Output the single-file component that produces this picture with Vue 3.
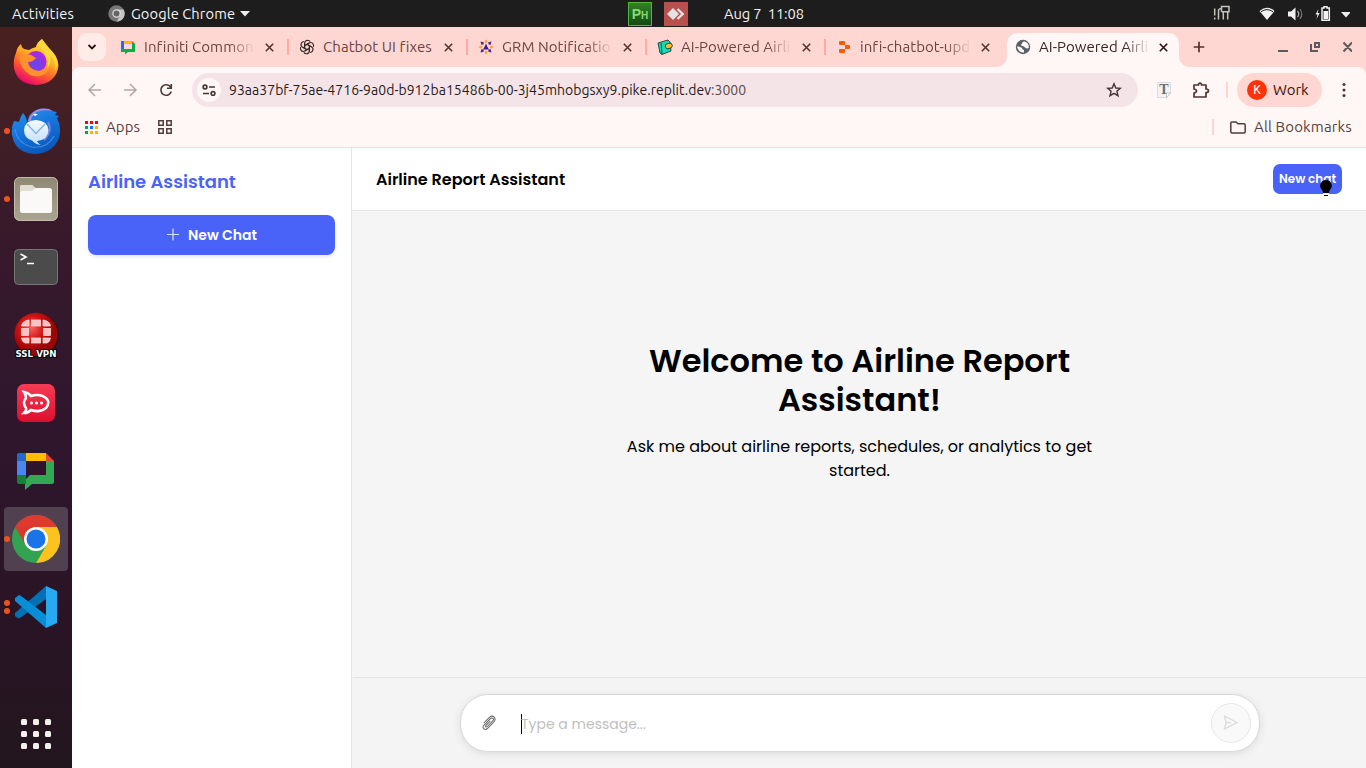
<script setup>
const tabs = [
  { icon: 'chat', title: 'Infiniti Common' },
  { icon: 'gpt', title: 'Chatbot UI fixes' },
  { icon: 'grm', title: 'GRM Notification' },
  { icon: 'wallet', title: 'AI-Powered Airline' },
  { icon: 'replit', title: 'infi-chatbot-update' },
  { icon: 'globe', title: 'AI-Powered Airline', active: true },
]
const appColors = ['#f00', '#f00', '#f00', '#00a83f', '#1573ff', '#ffb400', '#00a83f', '#ffb400', '#ffb400']
const angles = [0, 45, 90, 135, 180, 225, 270, 315]
const petals = [0, 60, 120, 180, 240, 300]
</script>

<template>
  <div class="desktop">
    <header class="topbar">
      <span class="activities">Activities</span>
      <svg class="tb-chrome" width="17" height="17" viewBox="0 0 17 17"><circle cx="8.500" cy="8.500" r="8.200" fill="#777"/><path d="M8.500 4.500H15.600A8.200 8.200 0 0 1 8.800 16.700L12 10.500Z" fill="#c5c5c5"/><circle cx="8.500" cy="8.500" r="4.200" fill="#ddd"/><circle cx="8.500" cy="8.500" r="3" fill="#666"/></svg>
      <span class="tb-app">Google Chrome</span>
      <svg class="tb-caret" width="10" height="6" viewBox="0 0 10 6"><path d="M0 0H10L5 5.500Z" fill="#eee"/></svg>
      <span class="ph">Ph</span>
      <svg class="anydesk" width="24" height="24" viewBox="0 0 24 24"><path fill="#b8504d" d="M0 0H24V24H0Z"/><path d="M9 6L15 12L9 18L3 12Z" fill="#e3e3e3"/><path d="M13.500 7L18.700 12L13.500 17" fill="none" stroke="#e3e3e3" stroke-width="2.400"/></svg>
      <span class="clock">Aug 7&nbsp; 11:08</span>
      <svg class="tray" width="140" height="20" viewBox="1210 3 140 20">
        <path d="M1214.700 7.500V14.500M1214.700 16.500V18.500M1218.500 18.500V8.500M1218.500 9.500Q1219 7.500 1221 7.500M1223.300 18.500V11.500M1227.700 18.500V11.500M1221.500 10.700H1229V5.500H1221.500V10.700" fill="none" stroke="#c4c4bd" stroke-width="1.500"/>
        <path d="M1259.500 10Q1267 3.500 1274.500 10L1267 19Z" fill="#f2f2f2"/><path d="M1261 10.700Q1267 6.500 1273 10.700" fill="none" stroke="#1d1d1d"/>
        <path d="M1288 10.500H1291L1295.500 6.500V19.500L1291 15.500H1288Z" fill="#f2f2f2"/><path d="M1297.500 10Q1300 13 1297.500 16" fill="none" stroke="#aaa" stroke-width="1.300"/><path d="M1300 8Q1303.500 13 1300 18" fill="none" stroke="#777" stroke-width="1.200"/>
        <path d="M1318.500 8L1315.500 13.500H1317.500L1316.500 18L1319.700 12H1317.600Z" fill="#eee"/><path d="M1322 7H1324V5.800H1327V7H1329.300V19.300H1322Z" fill="none" stroke="#f2f2f2" stroke-width="1.500"/><path fill="#f2f2f2" d="M1323.500 10H1328V18H1323.500Z"/>
        <path d="M1341 11H1351L1346 16.500Z" fill="#eee"/>
      </svg>
    </header>

    <div class="below">
      <nav class="dock">
        <div class="slot"><svg width="48" height="48" viewBox="0 0 48 48">
          <defs>
            <linearGradient id="ff" x1=".8" y1="0" x2=".3" y2="1"><stop offset="0" stop-color="#fff04a"/><stop offset=".42" stop-color="#ffad22"/><stop offset=".7" stop-color="#ff5632"/><stop offset="1" stop-color="#e8006f"/></linearGradient>
            <radialGradient id="fp" cx=".5" cy=".65"><stop offset="0" stop-color="#5e4aef"/><stop offset="1" stop-color="#a52be0"/></radialGradient>
            <linearGradient id="tb" x1=".2" y1="0" x2=".6" y2="1"><stop offset="0" stop-color="#2391ee"/><stop offset=".5" stop-color="#1571d8"/><stop offset="1" stop-color="#0b56b8"/></linearGradient>
            <linearGradient id="env" x1="0" y1="0" x2="0" y2="1"><stop offset="0" stop-color="#f4f9ff"/><stop offset="1" stop-color="#bfe0ff"/></linearGradient>
            <linearGradient id="fl" x1="0" y1="0" x2="0" y2="1"><stop offset="0" stop-color="#8f8873"/><stop offset="1" stop-color="#aaa390"/></linearGradient>
            <radialGradient id="vp" cx=".4" cy=".35"><stop offset="0" stop-color="#f6605c"/><stop offset=".55" stop-color="#d01414"/><stop offset="1" stop-color="#9a0505"/></radialGradient>
            <linearGradient id="rk" x1="0" y1="0" x2="0" y2="1"><stop offset="0" stop-color="#f73c55"/><stop offset="1" stop-color="#da102f"/></linearGradient>
          </defs>
          <path d="M4 15Q5 9 9 6Q9 9 12 11L17 12Q20 10 24 9Q25 4 30 1Q33 8 40 13Q48 22 46 31Q42 46 24 47Q5 46 2 30Q1 21 4 15Z" fill="url(#ff)"/>
          <circle cx="24" cy="23.500" r="10.500" fill="url(#fp)"/>
          <path d="M7 19Q13 15 19 17L24 20Q21 24 16 24Q17 32 27 33Q37 31 36 20Q40 27 35 34Q28 41 18 37Q9 32 7 19Z" fill="#ff922b"/>
          <path d="M30 1Q26 8 31 13Q38 21 35 31Q40 25 38 17Q45 25 43 33Q48 24 41 15Z" fill="#ffd83d"/>
        </svg></div>
        <div class="slot on"><svg width="50" height="48" viewBox="0 0 50 48">
          <path d="M12 6Q9 10 8 15L3 14Q0 20 1 28Q4 46 24 47Q42 46 48 31Q51 20 46 11L48 9L44 8L46 5L41 4Q36 1 30 1.500Q22 3 18 9L16 17Q16 10 12 6Z" fill="url(#tb)"/>
          <path d="M17 14Q20 4 29 2Q37 .5 42 4Q32 2 26 5Q20 9 20 14Z" fill="#a58ae8"/>
          <path d="M22 7.500Q24 6 27 7.500L24 9Z" fill="#fff"/>
          <path d="M4 22Q6 36 21 40Q36 42 43 29" fill="none" stroke="#3c8fe8" stroke-width="1.200"/>
          <path d="M37 15Q42 24 33 33" fill="none" stroke="#7a86e6" stroke-width="2"/>
          <path d="M25 13Q37 14 37.500 23Q37 33 26 34Q28 38 31 38Q25 38 21 33.500Q13 31 13 23Q14 13 25 13Z" fill="url(#env)"/><path d="M16 17L25 26.500L34 17" fill="none" stroke="#8bb4df" stroke-width="1.500"/>
        </svg></div>
        <div class="slot on"><svg width="48" height="48" viewBox="0 0 48 48"><rect x="2.500" y="2.500" width="43" height="43" rx="5" fill="url(#fl)" stroke="#c2bcae"/><path d="M8 12Q8 10 10 10H20L24 14H22V22H8Z" fill="#dedacf"/><rect x="8" y="13" width="32" height="25" rx="2.500" fill="#faf9f8"/><path d="M8 17V12Q8 10 10 10H20L23.500 13L20 16H10Z" fill="#e1ddd3"/></svg></div>
        <div class="slot"><svg width="48" height="48" viewBox="0 0 48 48"><rect x="2.500" y="6.500" width="43" height="35" rx="4" fill="#4b4b4b" stroke="#777"/><path d="M8.500 11L14 14L8.500 17M15 20.500H22" fill="none" stroke="#fff" stroke-width="1.700"/></svg></div>
        <div class="slot"><svg width="48" height="50" viewBox="0 0 48 50"><circle cx="24.500" cy="25.500" r="22" fill="#17090e"/><circle cx="24" cy="24.500" r="21.700" fill="url(#vp)"/><g fill="#ffc0c0" stroke="#ffe6e6" stroke-width=".7"><rect x="19.500" y="10" width="9" height="6" /><rect x="19.500" y="28" width="9" height="5"/><rect x="9.500" y="18.500" width="7" height="7"/><rect x="31.500" y="18.500" width="7" height="7"/><path d="M9.500 16Q10 11 17 10V16ZM31 10Q38 11 38.500 16H31ZM9.500 28H17V33H13Q10 32 9.500 28ZM31 28H38.500Q38 32 35 33H31Z"/></g><text x="24" y="47" text-anchor="middle" class="vpn" textLength="41" lengthAdjust="spacingAndGlyphs">SSL VPN</text></svg></div>
        <div class="slot"><svg width="48" height="48" viewBox="0 0 48 48"><rect x="5" y="5" width="38" height="38" rx="7" fill="url(#rk)"/><path d="M12 13Q17 14 19 17Q29 14 35 20Q38 24 34 29Q28 34 19 31Q16 34 12 34Q15 31 14 29Q10 24 14 19Q14 16 12 13Z" fill="none" stroke="#fff" stroke-width="2.500"/><g fill="#fff"><circle cx="19.500" cy="24" r="1.500"/><circle cx="24.500" cy="24" r="1.500"/><circle cx="29.500" cy="24" r="1.500"/></g></svg></div>
        <div class="slot"><svg width="48" height="48" viewBox="0 0 48 48"><path fill="#2467d3" d="M5 8Q5 6 7 6H14V14H5Z"/><path fill="#4687f2" d="M5 14H14V28H5Z"/><path fill="#ffbc05" d="M14 6H34V14H14Z"/><path fill="#ea4535" d="M34 6L42 14H34Z"/><path fill="#33a753" d="M34 14H42V35Q42 37 40 37H20L13 43V33L18 28H34Z"/><path fill="#188038" d="M5 28H14V37H7Q5 37 5 35Z"/></svg></div>
        <div class="slot on current"><svg width="48" height="48" viewBox="0 0 48 48"><circle cx="24" cy="24" r="24" fill="#33a352"/><path d="M3.200 12A24 24 0 0 1 44.800 12L24 24Z" fill="#e03a30"/><path d="M44.800 12A24 24 0 0 1 24 48L34.400 30L24 12Z" fill="#fcc31e"/><path d="M3.200 12L13.600 30L24 24L24 12Z" fill="#dc362e"/><path d="M34.400 30L24 48L13.600 30Z" fill="#33a352"/><circle cx="24" cy="24" r="12" fill="#fff"/><circle cx="24" cy="24" r="9.500" fill="#1b73e8"/></svg></div>
        <div class="slot on two"><svg width="48" height="48" viewBox="0 0 48 48"><path d="M3 30L34 3V16L8 35Q6 36 3 33Z" fill="#0270b4"/><path d="M3 15L7 12Q8 12 9 13L34 32V45L3 18Z" fill="#078ed6"/><path d="M34 3L45 8V40L34 45Z" fill="#28aaf2"/></svg></div>
        <div class="all-apps"><i v-for="n in 9" :key="n"></i></div>
      </nav>

      <main class="window">
        <div class="strip">
          <button class="tab-search"><svg width="10" height="8" viewBox="0 0 10 8"><path d="M1.500 2L5 5.500L8.500 2" fill="none" stroke="#291413" stroke-width="1.800"/></svg></button>
          <div v-for="(t, i) in tabs" :key="i" class="tab" :class="{ active: t.active, sep: i < 4 }">
            <svg class="fav" width="16" height="16" viewBox="0 0 16 16">
              <g v-if="t.icon === 'chat'"><path fill="#1a6bff" d="M1 2H4V10H1Z"/><path fill="#ffba00" d="M4 2H12V5H4Z"/><path fill="#f33" d="M12 2L15 5H12Z"/><path fill="#00b04b" d="M12 5H15V13H8L5 15.500V13H1V10H12Z"/></g>
              <g v-else-if="t.icon === 'gpt'" fill="none" stroke="#352a29" stroke-width="1.100"><path v-for="a in petals" :key="a" d="M5.600 9.400V4.100Q5.800 1.300 8.600 1.200Q10.300 1.300 11.200 2.600M8 5.300L12.600 8" :transform="`rotate(${a} 8 8)`"/></g>
              <g v-else-if="t.icon === 'grm'"><path v-for="a in angles" :key="a" d="M8 .3L9.700 3L8 4.500L6.300 3Z" :fill="a % 90 ? '#49278c' : '#ffa23f'" :transform="`rotate(${a} 8 8)`"/><path d="M8 4.500L9.500 8L11 10.500H5L6.500 8Z" fill="#3a1b8d"/></g>
              <g v-else-if="t.icon === 'wallet'" stroke="#263638" stroke-width=".9"><path d="M1 4L11 1L13 3L14 12L5 15.500L3 14Z" fill="#12dcb5"/><path d="M4 4L5 15" fill="none"/><path d="M9 5L14 4Q17 7 14 9L10 10Q7 8 9 5Z" fill="#ffbd18"/></g>
              <path v-else-if="t.icon === 'replit'" fill="#ff5900" d="M4 2H8Q9 2 9 3V6H4Q3 6 3 5V3Q3 2 4 2ZM9 6H13Q14 6 14 7V9Q14 10 13 10H9ZM4 10H9V13Q9 14 8 14H4Q3 14 3 13V11Q3 10 4 10Z"/>
              <g v-else><circle cx="8" cy="8" r="7.200" fill="#596168"/><path d="M2 7.500Q5 7 7 9Q7 11 9 11V13.500Q4 14 2 8ZM9 2.200Q7 3 7 4.500Q5.500 5 6.500 7Q9 6.500 10 8.500Q12 10 13.800 9Q14.500 4 9 2.200Z" fill="#fff7f5"/></g>
            </svg>
            <span class="title">{{ t.title }}</span>
            <svg class="x" width="9" height="9" viewBox="0 0 9 9"><path d="M.8 .8L8.200 8.200M8.200 .8L.8 8.200"/></svg>
          </div>
          <svg class="plus" width="12" height="12" viewBox="0 0 12 12"><path d="M6 .7V11.300M.7 6H11.300" stroke="#5c2d2b" stroke-width="1.700"/></svg>
          <svg class="winbtns" width="76" height="14" viewBox="0 0 76 14"><path d="M2 11H12M35 4V11H42M39 3H43V7H39ZM67.500 2.500L76 11.500M76 2.500L67.500 11.500" fill="none" stroke="#5d5a5d" stroke-width="2"/></svg>
        </div>

        <div class="chrome-body">
          <div class="toolbar">
            <svg class="nav" width="96" height="16" viewBox="86 82 96 16"><path d="M101 90H89.500M95 84L89 90L95 96M124 90H135.500M130 84L136 90L130 96" fill="none" stroke="#b5a6a5" stroke-width="1.500"/><path d="M170.600 87A5.300 5.300 0 1 0 171.300 91.500M171.300 84V88.200H167" fill="none" stroke="#4e3634" stroke-width="1.600"/></svg>
            <div class="omnibox">
              <span class="site"><svg width="14" height="12" viewBox="0 0 14 12" fill="none" stroke="#453534" stroke-width="1.600"><circle cx="3" cy="3" r="1.900"/><path d="M7 3H13M1 9.500H7"/><circle cx="11" cy="9.500" r="1.900"/></svg></span>
              <span class="url">93aa37bf-75ae-4716-9a0d-b912ba15486b-00-3j45mhobgsxy9.pike.replit.dev<em>:3000</em></span>
              <svg class="star" width="16" height="16" viewBox="0 0 16 16"><path d="M8 1.800L9.800 6L14.300 6.300L10.900 9.200L12 13.700L8 11.300L4 13.700L5.100 9.200L1.700 6.300L6.200 6Z" fill="none" stroke="#453534" stroke-width="1.400"/></svg>
            </div>
            <svg class="text-ext" width="14" height="16" viewBox="0 0 14 16"><path d="M.5 .5H13.500V11L9.500 15.500H.5Z" fill="#f4f3f3" stroke="#dcdadb"/><path d="M13.500 11L9.500 15.500V11Z" fill="#fff" stroke="#b9b9bd" stroke-width=".8"/><text x="7" y="12" text-anchor="middle">T</text></svg>
            <svg class="puzzle" width="18" height="18" viewBox="0 0 18 18"><path d="M2 4H6.500Q6.500 2 8 2Q9.500 2 9.500 4H14V8Q16.500 8 16.500 10Q16.500 11.500 14 11.500V16H2V12Q4.500 11.500 4.500 10Q4.500 8.500 2 8Z" fill="none" stroke="#503331" stroke-width="1.700" stroke-linejoin="round"/></svg>
            <i class="vline"></i>
            <div class="profile"><span class="avatar">K</span><span class="work">Work</span></div>
            <svg class="kebab" width="4" height="16" viewBox="0 0 4 16" fill="#503331"><circle cx="2" cy="2.500" r="1.500"/><circle cx="2" cy="8" r="1.500"/><circle cx="2" cy="13.500" r="1.500"/></svg>
          </div>
          <div class="bookmarks">
            <span class="appgrid"><i v-for="(c, i) in appColors" :key="i" :style="{ background: c }"></i></span>
            <span class="apps">Apps</span>
            <svg class="four" width="14" height="14" viewBox="0 0 14 14"><path d="M.8 .8H5.200V5.200H.8ZM8.800 .8H13.200V5.200H8.800ZM.8 8.800H5.200V13.200H.8ZM8.800 8.800H13.200V13.200H8.800Z" fill="none" stroke="#503c3a" stroke-width="1.500"/></svg>
            <i class="vline bm"></i>
            <svg width="16" height="13" viewBox="0 0 16 13"><path d="M.8 2Q.8 .9 2 .9H6L8 2.700H14Q15.200 2.700 15.200 4V10.800Q15.200 12 14 12H2Q.8 12 .8 10.800Z" fill="none" stroke="#503c3a" stroke-width="1.500"/></svg>
            <span class="allbm">All Bookmarks</span>
          </div>
        </div>

        <div class="page">
          <aside>
            <h2><span>Airline Assistant</span></h2>
            <button class="new-chat"><svg width="14" height="14" viewBox="0 0 14 14"><path d="M7 .5V12.500M1 6.500H13" stroke="#dce1ff" stroke-width="1.200"/></svg><span>New Chat</span></button>
          </aside>
          <section class="content">
            <div class="head"><h3>Airline Report Assistant</h3>
              <button class="small-new">New chat<svg class="bulb" width="12" height="18" viewBox="0 0 12 18"><path d="M6 0A5.700 5.700 0 0 1 10.500 9.300Q9 11 9 13H3Q3 11 1.500 9.300A5.700 5.700 0 0 1 6 0Z"/><path d="M3 13H9V14.200H3Z" fill="#e8e8e8"/><path d="M4 15H8V16H4Z"/></svg></button>
            </div>
            <div class="welcome"><h1>Welcome to Airline Report<br>Assistant!</h1><p>Ask me about airline reports, schedules, or analytics to get<br>started.</p></div>
            <footer><div class="composer">
              <svg class="clip" width="14" height="16" viewBox="0 0 14 16"><path d="M3.300 8.800L8.400 3.700C10.200 2 12.500 4 10.900 5.900L5.300 11.500C4.100 12.700 2.900 11.400 4 10.300L8.300 6M3.300 8.800L2 10C-.3 12.500 2.600 16 5.400 13.500L11.800 7C15 3.500 10.900-.9 7.400 2.400L1.800 8" fill="none" stroke="#686868" stroke-width="1.050"/></svg>
              <i class="caret"></i><span class="placeholder">Type a message...</span>
              <button class="send"><svg width="16" height="16" viewBox="0 0 16 16"><path d="M1.500 1L14 7.500L1.500 14L3 7.500ZM3 7.500H7.500" fill="none" stroke="#dadada" stroke-width="1.300"/></svg></button>
            </div></footer>
          </section>
        </div>
      </main>
    </div>
  </div>
</template>

<style>
html, body { margin: 0; overflow: hidden; }
</style>
<style scoped>
* { box-sizing: border-box; }
svg { display: block; flex: none; }
button { border: 0; padding: 0; font: inherit; }
.desktop { width: 1366px; height: 768px; display: flex; flex-direction: column; overflow: hidden; font: 15px/20px Ubuntu, "Open Sans", "Noto Sans", sans-serif; white-space: nowrap; }
.topbar { height: 27px; flex: none; background: #1d1d1d; color: #f2f2f2; display: flex; align-items: center; font-size: 14.667px; }
.activities { width: 97px; padding-left: 12px; letter-spacing: .2px; }
.tb-chrome { margin-left: 11px; }
.tb-app { width: 105px; margin-left: 6px; margin-right: 4px; letter-spacing: .1px; }
.ph { margin-left: 378px; width: 24px; height: 24px; border: 1px solid #52b83c; background: linear-gradient(#2b8425, #174817); color: #8ad871; font: bold 14px/22px "Liberation Sans", sans-serif; font-variant: small-caps; text-align: center; }
.anydesk { margin-left: 12px; }
.clock { margin-left: 36px; width: 82px; letter-spacing: -.13px; }
.tray { margin-left: auto; margin-right: 16px; }
.below { display: flex; height: 741px; }
.dock { width: 72px; flex: none; padding-top: 2px; background: linear-gradient(180deg, #49201f 0, #421f25 13%, #37192b 28%, #2f162d 55%, #291425 80%, #22161d 100%); display: flex; flex-direction: column; align-items: center; }
.slot { width: 64px; height: 64px; margin: 2px 0; display: grid; place-items: center; border-radius: 4px; position: relative; flex: none; }
.slot:first-child { margin-top: 1px; margin-bottom: 3px; }
.slot.current { background: #51404f; }
.slot.on::before { content: ""; position: absolute; left: 0; top: 29px; width: 6px; height: 6px; border-radius: 50%; background: #e95420; }
.slot.two::before { top: 25px; box-shadow: 0 8px #e95420; }
.vpn { font: bold 9.500px "DejaVu Sans", sans-serif; fill: #fff; stroke: #000; stroke-width: 2px; paint-order: stroke; }
.all-apps { display: grid; grid-template-columns: repeat(3, 6px); gap: 6px; margin-top: auto; margin-bottom: 19px; }
.all-apps i { width: 6px; height: 6px; border-radius: 1.500px; background: #f2f1ee; }
.window { width: 1294px; flex: none; display: flex; flex-direction: column; background: #ffd7d2; }
.strip { height: 40px; display: flex; align-items: center; padding-left: 6px; color: #6b4442; flex: none; }
.tab-search { width: 28px; height: 28px; border-radius: 9px; background: #ffebe8; display: grid; place-items: center; margin-right: 6px; }
.tab { width: 179px; height: 34px; margin-top: 6px; padding: 0 0 6px 8px; display: flex; align-items: center; position: relative; flex: none; }
.tab.active { width: 172px; background: #fff7f5; border-radius: 10px 10px 0 0; color: #382321; }
.tab.active::before, .tab.active::after { content: ""; position: absolute; bottom: 0; width: 10px; height: 10px; }
.tab.active::before { left: -10px; background: radial-gradient(circle at 0 0, transparent 9.500px, #fff7f5 10px); }
.tab.active::after { right: -10px; background: radial-gradient(circle at 100% 0, transparent 9.500px, #fff7f5 10px); }
.tab.sep::after { content: ""; position: absolute; right: 2px; top: 6px; width: 2px; height: 16px; background: #ffaba3; }
.title { width: 109px; margin-left: 8px; overflow: hidden; letter-spacing: .06px; -webkit-mask-image: linear-gradient(90deg, #000 78%, transparent 102%); mask-image: linear-gradient(90deg, #000 78%, transparent 102%); }
.tab:nth-child(3) .title { overflow: visible; -webkit-mask-image: none; mask-image: none; }
.x { margin-left: 11.500px; fill: none; stroke: #59312f; stroke-width: 1.600; }
.active .x { stroke: #291413; margin-left: 11px; }
.plus { margin-left: 14px; }
.winbtns { margin-left: auto; margin-right: 14px; }
.chrome-body { height: 81px; background: #fff7f5; border-bottom: 1px solid #fcd9d5; border-radius: 8px 8px 0 0; flex: none; }
.toolbar { height: 46px; display: flex; align-items: center; }
.nav { margin-left: 14px; }
.omnibox { width: 946px; height: 34px; margin-left: 10px; border-radius: 17px; background: #f4e4e7; display: flex; align-items: center; padding-left: 5px; font-size: 14px; color: #2a1b1b; }
.site { width: 24px; height: 24px; border-radius: 50%; background: #fff7f5; display: grid; place-items: center; margin-right: 8px; }
.url { letter-spacing: .025px; }
.url em { font-style: normal; color: #5e4848; }
.star { margin-left: auto; margin-right: 16px; }
.text-ext { margin-left: 19px; font: bold 14px "Liberation Serif", serif; fill: #6c6c6c; }
.puzzle { margin-left: 21px; }
.vline { width: 2px; height: 16px; background: #ffd5d0; margin-left: 16px; }
.profile { margin-left: 9px; width: 85px; height: 34px; border-radius: 17px; background: #ffd7d2; display: flex; align-items: center; padding-left: 10px; color: #40100e; }
.avatar { width: 20px; height: 20px; border-radius: 50%; background: #ff3208; color: #fff; font: 12px/20px Roboto, sans-serif; text-align: center; margin-right: 6px; }
.kebab { margin-left: 20px; }
.bookmarks { height: 34px; padding: 0 14px 6px 13px; display: flex; align-items: center; color: #5a4240; }
.appgrid { display: grid; grid-template-columns: repeat(3, 3px); gap: 2px; margin-right: 8px; }
.appgrid i { width: 3px; height: 3px; }
.apps { width: 35px; letter-spacing: .1px; }
.four { margin-left: 17px; }
.vline.bm { margin-left: auto; margin-right: 16px; }
.allbm { margin-left: 8px; width: 98px; letter-spacing: .14px; }
.page { height: 620px; display: flex; font-family: Poppins, Inter, sans-serif; background: #fff; }
aside { width: 280px; flex: none; border-right: 1px solid #e5e5e5; padding: 20px 16px; }
h1, h2, h3, p { margin: 0; }
h2 { font-size: 18px; line-height: 27px; font-weight: 600; color: #4a63fb; margin-bottom: 20px; }
.new-chat { width: 247px; height: 40px; border-radius: 8px; background: #4963f9; color: #fff; font-size: 14px; font-weight: 600; display: flex; align-items: center; justify-content: center; gap: 8px; box-shadow: 0 2px 3px #4963f922; }
.content { flex: 1; display: flex; flex-direction: column; background: #f4f4f4; }
.head { height: 63px; background: #fff; border-bottom: 1px solid #e5e5e5; display: flex; align-items: center; justify-content: space-between; padding: 0 24px; }
h3 { font-size: 16px; line-height: 24px; font-weight: 600; padding-top: 1px; }
.small-new { width: 69px; height: 30px; border-radius: 7px; background: #4963f9; color: #fff; font-size: 12px; font-weight: 600; position: relative; }
.bulb { position: absolute; left: 47px; top: 16px; }
.welcome { flex: 1; padding: 130px 0 0 1px; text-align: center; background: #f5f5f5; }
h1 { font-size: 32px; line-height: 39px; font-weight: 600; }
p { margin-top: 16px; font-size: 16px; line-height: 24px; }
footer { height: 91px; border-top: 1px solid #e5e5e5; padding: 16px 0 0 1px; margin-left: 1px; display: flex; justify-content: center; }
.composer { width: 800px; height: 58px; border: 1px solid #d9d9d9; border-radius: 28px; background: #fff; box-shadow: 0 2px 8px #0000001a; display: flex; align-items: center; padding: 0 8px 0 21px; }
.caret { width: 1px; height: 20px; background: #000; margin: 1px 0 0 25px; }
.placeholder { color: #bfbfbf; font-size: 14px; padding-top: 2px; margin-left: -1px; }
.send { width: 40px; height: 40px; border: 1px solid #e7e7e7; border-radius: 50%; background: #f9f9f9; display: grid; place-items: center; margin-left: auto; }
</style>
